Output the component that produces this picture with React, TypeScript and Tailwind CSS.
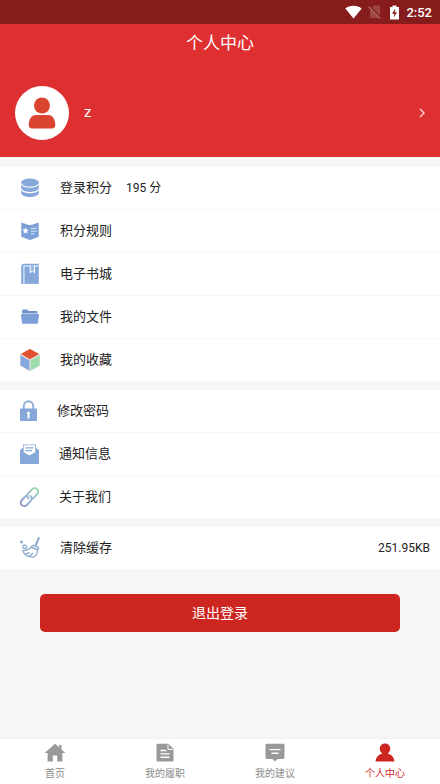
import type { ReactNode } from 'react';

function CoinsIcon() {
  return (
    <svg width="20" height="20" viewBox="0 0 20 20" fill="#86a7d9">
      <ellipse cx="10" cy="4.600" rx="8.900" ry="4" />
      <path d="M1.100 6.800c1.400 2 4.800 2.900 8.900 2.900s7.500-.9 8.900-2.900v3c0 2.300-4 4.100-8.900 4.100s-8.900-1.800-8.900-4.100z" />
      <path d="M1.100 12.200c1.400 2 4.800 3 8.900 3s7.500-1 8.900-3v2.600c0 2.300-4 4.300-8.900 4.300s-8.900-2-8.900-4.300z" />
    </svg>
  );
}

function RulesIcon() {
  return (
    <svg width="20" height="20" viewBox="0 0 20 20">
      <path d="M1.300 1.500C4 2.600 7.500 3.800 10 4c2.500-.2 6-1.400 8.700-2.500v14.300L10 18.900l-8.700-3.100z" fill="#7b9fd6" />
      <path d="M5.500 6.600l1 1.900 2.100.3-1.500 1.500.3 2.100-1.900-1-1.900 1 .3-2.100-1.500-1.500 2.100-.3z" fill="#fff" />
      <path d="M10.800 7.800l6-.8M10.800 10.300l6-.3M10.800 12.700h4" stroke="#dce7f7" strokeWidth="1.100" />
    </svg>
  );
}

function BookIcon() {
  return (
    <svg width="20" height="22" viewBox="0 0 20 22">
      <path d="M1.200 2.500L3 .8h15.800v1.700H3.500v18.400H1.200z" fill="#86a7d9" />
      <path d="M4.400 3.400h14.400v17.500H4.400z" fill="#86a7d9" />
      <path d="M10.200 2.300v7.500l2.200-1.900 2.200 1.900V2.300" fill="#9bb7e0" stroke="#fff" strokeWidth="1" />
    </svg>
  );
}

function FolderIcon() {
  return (
    <svg width="20" height="18" viewBox="0 0 20 18">
      <path d="M2.200 5.500V2.400c0-.5.400-.9.900-.9h4.200l1.200 1.400h8c.5 0 .9.400.9.900v1.700z" fill="#6f93c9" />
      <path d="M1.900 5.900h16.200c.6 0 1 .5.900 1l-1 7.800c-.1.700-.6 1.100-1.200 1.100H3.200c-.6 0-1.100-.4-1.200-1.100L1 6.900c0-.5.400-1 .9-1z" fill="#7b9fd6" />
    </svg>
  );
}

function CubeIcon() {
  return (
    <svg width="20" height="24" viewBox="0 0 20 24">
      <path d="M10 .4L19.900 6v11.700L10 23.500.1 17.700V6z" fill="#e4dfdc" />
      <path d="M10 .9l9 5.200-9 5.100-9-5.100z" fill="#e2512f" />
      <path d="M.4 7.300l9 5.100v10.200l-9-5.200z" fill="#86a7e0" />
      <path d="M19.600 7.300l-9 5.100v10.200l9-5.200z" fill="#9ddcac" />
    </svg>
  );
}

function LockIcon() {
  return (
    <svg width="17" height="22" viewBox="0 0 17 22">
      <path d="M3.800 10V5.900a4.700 4.700 0 019.400 0V10" fill="none" stroke="#8fadd9" strokeWidth="1.900" />
      <rect y="8.500" width="17" height="12.500" rx=".8" fill="#86a7d9" />
      <path d="M8.500 11.700a1.700 1.700 0 011 3v3.800h-2v-3.800a1.700 1.700 0 011-3z" fill="#fff" />
    </svg>
  );
}

function MailIcon() {
  return (
    <svg width="19" height="22" viewBox="0 0 19 22">
      <path d="M3 1.500h13v3.300l3 2.500V20a1 1 0 01-1 1H1a1 1 0 01-1-1V7.300l3-2.500z" fill="#86a7d9" />
      <path d="M3.700 2.200h11.600v7l-5.800 3.400-5.800-3.400z" fill="#fff" />
      <path d="M5.500 4.900h8M5.500 7.700h6.500" stroke="#86a7d9" strokeWidth="1.300" />
    </svg>
  );
}

function LinkIcon() {
  return (
    <svg width="19" height="22" viewBox="0 0 19 22" fill="none" strokeWidth="1.900" strokeLinecap="round">
      <defs>
        <linearGradient id="chain" x1="1" y1="20" x2="18" y2="2" gradientUnits="userSpaceOnUse">
          <stop offset="0" stopColor="#8b92cc" />
          <stop offset=".5" stopColor="#95b5cf" />
          <stop offset="1" stopColor="#9ddca4" />
        </linearGradient>
      </defs>
      <g stroke="url(#chain)">
        <path d="M8.500 12.300c-1.700-1.400-1.700-3.500-.2-5l3.400-3.700c1.600-1.700 4-1.800 5.400-.5s1.400 3.500 0 5.100l-3.500 3.600c-.6.600-1.200.9-1.900 1" />
        <path d="M10.500 9.900c1.700 1.400 1.700 3.500.2 5l-3.400 3.700c-1.600 1.700-4 1.800-5.400.5s-1.400-3.500 0-5.100l3.500-3.600c.4-.4.800-.6 1.200-.8" />
      </g>
    </svg>
  );
}

function BroomIcon() {
  return (
    <svg width="20" height="22" viewBox="0 0 20 22" fill="none" stroke="#8eabcd" strokeWidth="1.300" strokeLinecap="round" strokeLinejoin="round">
      <path d="M18.700 1.200l-3 7.200" strokeWidth="2.200" />
      <path d="M12.300 8.600c2-.5 4.700.3 6.300 2.100l-.9 2.200-6.600-2.700z" fill="#dbe6f3" />
      <path d="M11.100 10.200C9 12.400 6 13.500 2.700 13.600c1.300 4.100 5.400 6.700 10.900 6.600 2.700-1.800 4-4.400 4.100-7.300" />
      <path d="M5.300 16.800c1.500 0 2.800-.4 4-1.200M9.300 19.300c1.600-.8 2.700-1.800 3.500-3.100" />
      <circle cx="4.700" cy="9.700" r="1.900" />
      <circle cx="1.500" cy="5" r=".8" fill="#8eabcd" />
    </svg>
  );
}

const groups: { label: string; icon: ReactNode; extra?: string; value?: string }[][] = [
  [
    { label: '登录积分', icon: <CoinsIcon />, extra: '195 分' },
    { label: '积分规则', icon: <RulesIcon /> },
    { label: '电子书城', icon: <BookIcon /> },
    { label: '我的文件', icon: <FolderIcon /> },
    { label: '我的收藏', icon: <CubeIcon /> },
  ],
  [
    { label: '修改密码', icon: <LockIcon /> },
    { label: '通知信息', icon: <MailIcon /> },
    { label: '关于我们', icon: <LinkIcon /> },
  ],
  [{ label: '清除缓存', icon: <BroomIcon />, value: '251.95KB' }],
];

const tabs: { label: string; icon: ReactNode; active?: boolean }[] = [
  {
    label: '首页',
    icon: <path d="M11 .8L.6 10h3v8.500h5.200v-6h4.400v6h5.200V10h3L17.500 6.500V2h-2.600v2.200z" />,
  },
  {
    label: '我的履职',
    icon: (
      <>
        <path d="M3.800.8h10.700l5 5v11.400c0 .8-.5 1.300-1.300 1.300H3.800c-.8 0-1.300-.5-1.300-1.300V2.100c0-.8.500-1.300 1.300-1.300z" />
        <path d="M14 1.500v4.800h5" fill="none" stroke="#fff" strokeWidth="1" />
        <path d="M6.500 7.500h6M6.500 10.900h9M6.500 14.300h9" fill="none" stroke="#fff" strokeWidth="1.400" />
      </>
    ),
  },
  {
    label: '我的建议',
    icon: (
      <>
        <path d="M2.800.8h16.400c.8 0 1.300.5 1.300 1.300v12.500c0 .8-.5 1.300-1.300 1.300h-5.700L11 18.400l-2.500-2.500H2.800c-.8 0-1.300-.5-1.300-1.300V2.100c0-.8.500-1.300 1.300-1.300z" />
        <path d="M5.500 6.600h11M7.500 10.300h7" fill="none" stroke="#fff" strokeWidth="1.400" />
      </>
    ),
  },
  {
    label: '个人中心',
    active: true,
    icon: <path d="M11 .5c3 0 5.200 2.200 5.200 5.200 0 2-1 3.800-2.500 4.700 3.700.8 6.300 3.500 6.800 8.200h-19c.5-4.700 3.100-7.400 6.800-8.200-1.500-.9-2.500-2.700-2.500-4.700C5.800 2.700 8 .5 11 .5z" />,
  },
];

function StatusBar() {
  return (
    <div className="flex h-6 items-center justify-end bg-[#861d1c] pr-2 text-white">
      <svg width="17" height="14" viewBox="0 0 17 14" fill="currentColor">
        <path d="M8.500 13.500L.3 3.400C4.800-.2 12.200-.2 16.700 3.400z" />
      </svg>
      <svg className="ml-1.5" width="13" height="14" viewBox="0 0 13 14">
        <path d="M6 .5h6V13H2V4.500z" fill="#9d4545" />
        <path d="M1 1l11.500 12" stroke="#861d1c" strokeWidth="2.500" />
        <path d="M.5 1.500l11.500 12" stroke="#b06a69" strokeWidth="1.200" />
      </svg>
      <svg className="ml-2" width="11" height="15" viewBox="0 0 11 15">
        <path d="M3.500.5h4V2H10v12.500H1V2h2.500z" fill="#fff" />
        <path d="M6.300 3.500L3 8.800h2.200L4.700 12.500 8 7.300H5.800z" fill="#861d1c" />
      </svg>
      <span className="ml-1.5 pt-0.5 text-[13px] font-medium">2:52</span>
    </div>
  );
}

export default function App() {
  return (
    <div className="flex min-h-screen flex-col bg-[#f6f6f6] font-[Roboto,'Noto_Sans_CJK_SC',sans-serif] text-[13px] text-[#222]">
      <StatusBar />

      <header className="bg-[#df3031] text-white">
        <h1 className="flex h-10 items-center justify-center text-[17px]">个人中心</h1>
        <button type="button" className="flex h-[93px] w-full items-center px-[15px] pt-1">
          <span className="flex size-[54px] items-center justify-center rounded-full bg-white">
            <svg width="28" height="32" viewBox="0 0 28 32" fill="#d94531">
              <circle cx="14" cy="8.500" r="8" />
              <path d="M8 18h12c4.500 0 7 4 7.300 9.500.1 2.500-1.300 4-3.500 4H4.200c-2.200 0-3.600-1.500-3.500-4C1 22 3.500 18 8 18z" />
            </svg>
          </span>
          <span className="ml-[15px] text-[15px]">z</span>
          <svg className="ml-auto" width="6" height="10" viewBox="0 0 6 10" fill="none" stroke="#fbd3d0" strokeWidth="1.400">
            <path d="M1 1l4 4-4 4" />
          </svg>
        </button>
      </header>

      <main className="flex flex-1 flex-col gap-[9px] pt-2.5">
        {groups.map((rows) => (
          <ul key={rows[0].label} className="divide-y divide-[#f7f7f7] bg-white">
            {rows.map((row) => (
              <li key={row.label}>
                <button type="button" className="flex h-[42px] w-full items-center pr-2.5 pl-5">
                  {row.icon}
                  <span className="ml-5">{row.label}</span>
                  {row.extra && <span className="ml-3.5 text-xs">{row.extra}</span>}
                  {row.value && <span className="ml-auto text-xs">{row.value}</span>}
                </button>
              </li>
            ))}
          </ul>
        ))}

        <div className="px-10 pt-4">
          <button type="button" className="h-[38px] w-full rounded-[5px] bg-[#cd2621] text-sm text-white">
            退出登录
          </button>
        </div>
      </main>

      <nav className="grid h-[46px] grid-cols-4 border-t border-[#f0f0f0] bg-white">
        {tabs.map((tab) => (
          <a
            key={tab.label}
            href="#"
            className={
              tab.active
                ? 'flex flex-col items-center gap-1 pt-1 text-[10px] leading-4 text-[#cd2621]'
                : 'flex flex-col items-center gap-1 pt-1 text-[10px] leading-4 text-[#8c8c8c]'
            }
          >
            <svg width="22" height="19" viewBox="0 0 22 19" fill={tab.active ? '#cd2621' : '#999'}>
              {tab.icon}
            </svg>
            {tab.label}
          </a>
        ))}
      </nav>
    </div>
  );
}
